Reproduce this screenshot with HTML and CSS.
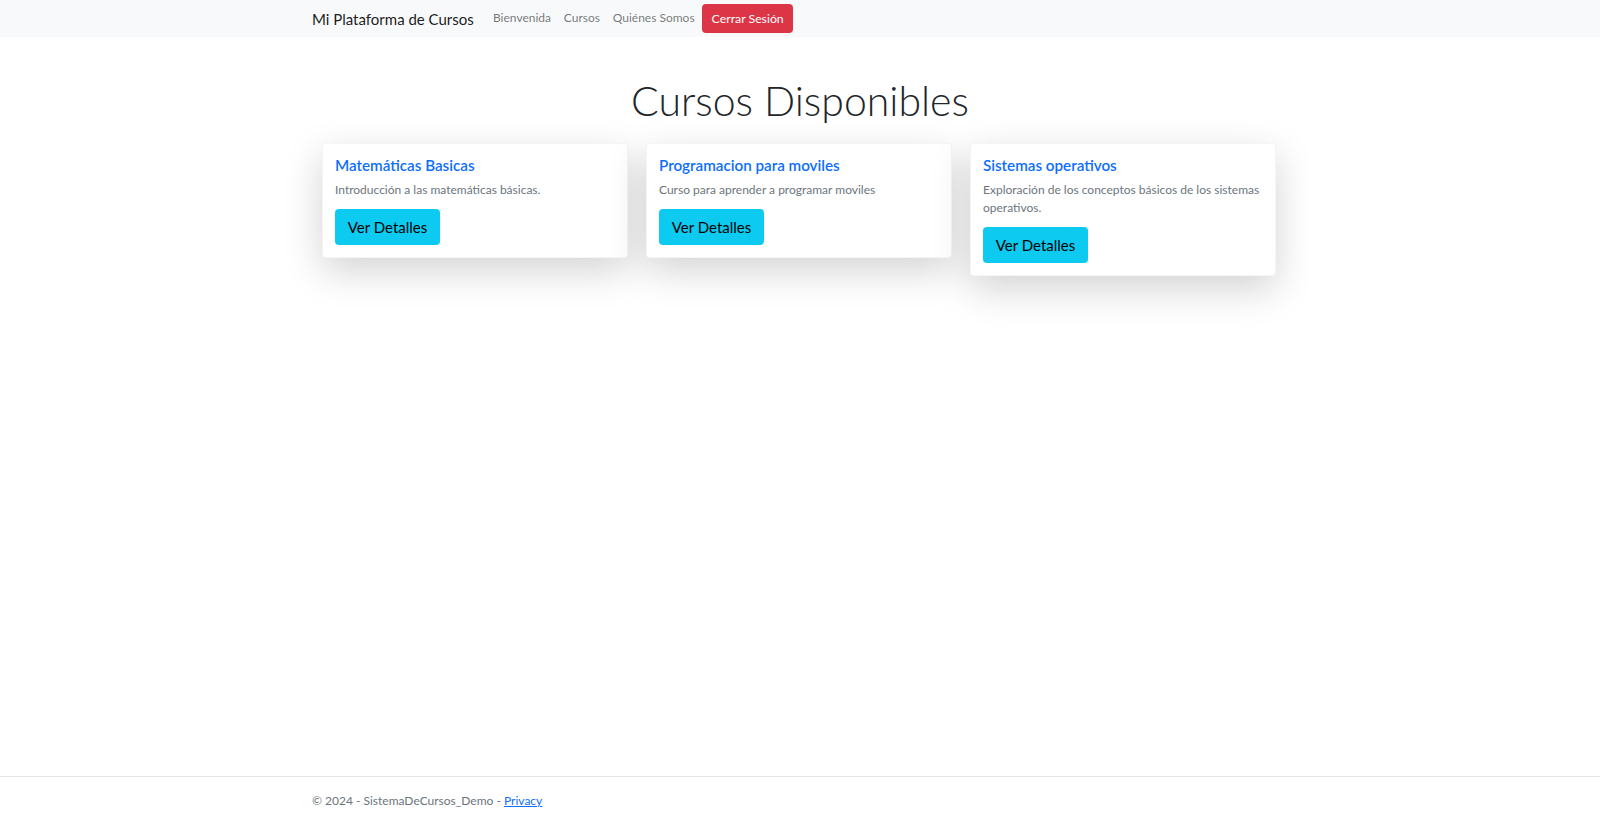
FILE: index.html
```html
<!DOCTYPE html>
<html lang="es">
<head>
<meta charset="utf-8">
<title>Cursos Disponibles</title>
<link rel="stylesheet" href="styles.css">
</head>
<body>
<div class="page">
  <header class="navbar">
    <div class="container nav-inner">
      <a class="brand" href="#">Mi Plataforma de Cursos</a>
      <nav class="nav-links">
        <a class="nav-link" href="#">Bienvenida</a>
        <a class="nav-link" href="#">Cursos</a>
        <a class="nav-link" href="#">Quiénes Somos</a>
        <a class="btn-danger" href="#">Cerrar Sesión</a>
      </nav>
    </div>
  </header>
  <main class="container main">
    <h1 class="display">Cursos Disponibles</h1>
    <div class="cards">
      <div class="card">
        <h5 class="card-title">Matemáticas Basicas</h5>
        <p class="card-text">Introducción a las matemáticas básicas.</p>
        <a class="btn-info" href="#">Ver Detalles</a>
      </div>
      <div class="card">
        <h5 class="card-title">Programacion para moviles</h5>
        <p class="card-text">Curso para aprender a programar moviles</p>
        <a class="btn-info" href="#">Ver Detalles</a>
      </div>
      <div class="card">
        <h5 class="card-title">Sistemas operativos</h5>
        <p class="card-text">Exploración de los conceptos básicos de los sistemas operativos.</p>
        <a class="btn-info" href="#">Ver Detalles</a>
      </div>
    </div>
  </main>
</div>
<footer class="footer">
  <div class="container">&copy; 2024 - SistemaDeCursos_Demo - <a class="privacy" href="#">Privacy</a></div>
</footer>
</body>
</html>
```

FILE: styles.css
```css
* { box-sizing: border-box; }
html, body { margin: 0; padding: 0; }
body {
  font-family: Lato, "Open Sans", "Liberation Sans", sans-serif;
  font-size: 12px;
  line-height: 1.5;
  color: #212529;
  background: #fff;
  overflow: hidden;
}
a { text-decoration: none; }
.page { min-height: 776px; }
.container {
  width: 1000px;
  margin: 0 auto;
  padding: 0 12px;
}
.navbar {
  background: #f8f9fa;
  height: 37px;
}
.nav-inner {
  display: flex;
  align-items: center;
  height: 37px;
}
.brand {
  font-size: 15px;
  color: rgba(0,0,0,.9);
  margin-right: 12.8px;
  line-height: 24px;
}
.nav-links {
  display: flex;
  align-items: center;
}
.nav-link {
  color: rgba(0,0,0,.55);
  padding: 0 6.4px;
  font-size: 12px;
}
.btn-danger {
  display: inline-block;
  background: #dc3545;
  color: #fff;
  border-radius: 4px;
  padding: 4.5px 9.6px;
  line-height: 19.2px;
  font-size: 12.3px;
  margin-left: 1px;
}
.main { text-align: center; }
.display {
  font-size: 41px;
  font-weight: 300;
  line-height: 54px;
  margin: 0;
  padding-top: 37px;
  padding-bottom: 15px;
  color: #212529;
}
.cards {
  display: flex;
  align-items: flex-start;
  gap: 18px;
  margin-left: 10px;
  text-align: left;
}
.card {
  width: 306px;
  background: #fff;
  border: 1px solid rgba(0,0,0,.04);
  border-radius: 4px;
  padding: 12px;
  box-shadow: 0 12.8px 38.4px rgba(0,0,0,.175);
}
.card-title {
  margin: 0 0 6px;
  font-size: 15.2px;
  font-weight: 600;
  line-height: 19px;
  color: #0d6efd;
}
.card-text {
  margin: 0 0 10.5px;
  font-size: 12px;
  line-height: 17.5px;
  color: #6c757d;
}
.btn-info {
  display: inline-block;
  background: #0dcaf0;
  color: #000;
  font-size: 15px;
  line-height: 24px;
  padding: 6px 12.8px;
  border-radius: 4px;
}
.footer {
  border-top: 1px solid #e5e5e5;
  line-height: 48px;
  color: #6c757d;
  font-size: 12px;
  white-space: nowrap;
}
.privacy {
  color: #0d6efd;
  text-decoration: underline;
}
```
